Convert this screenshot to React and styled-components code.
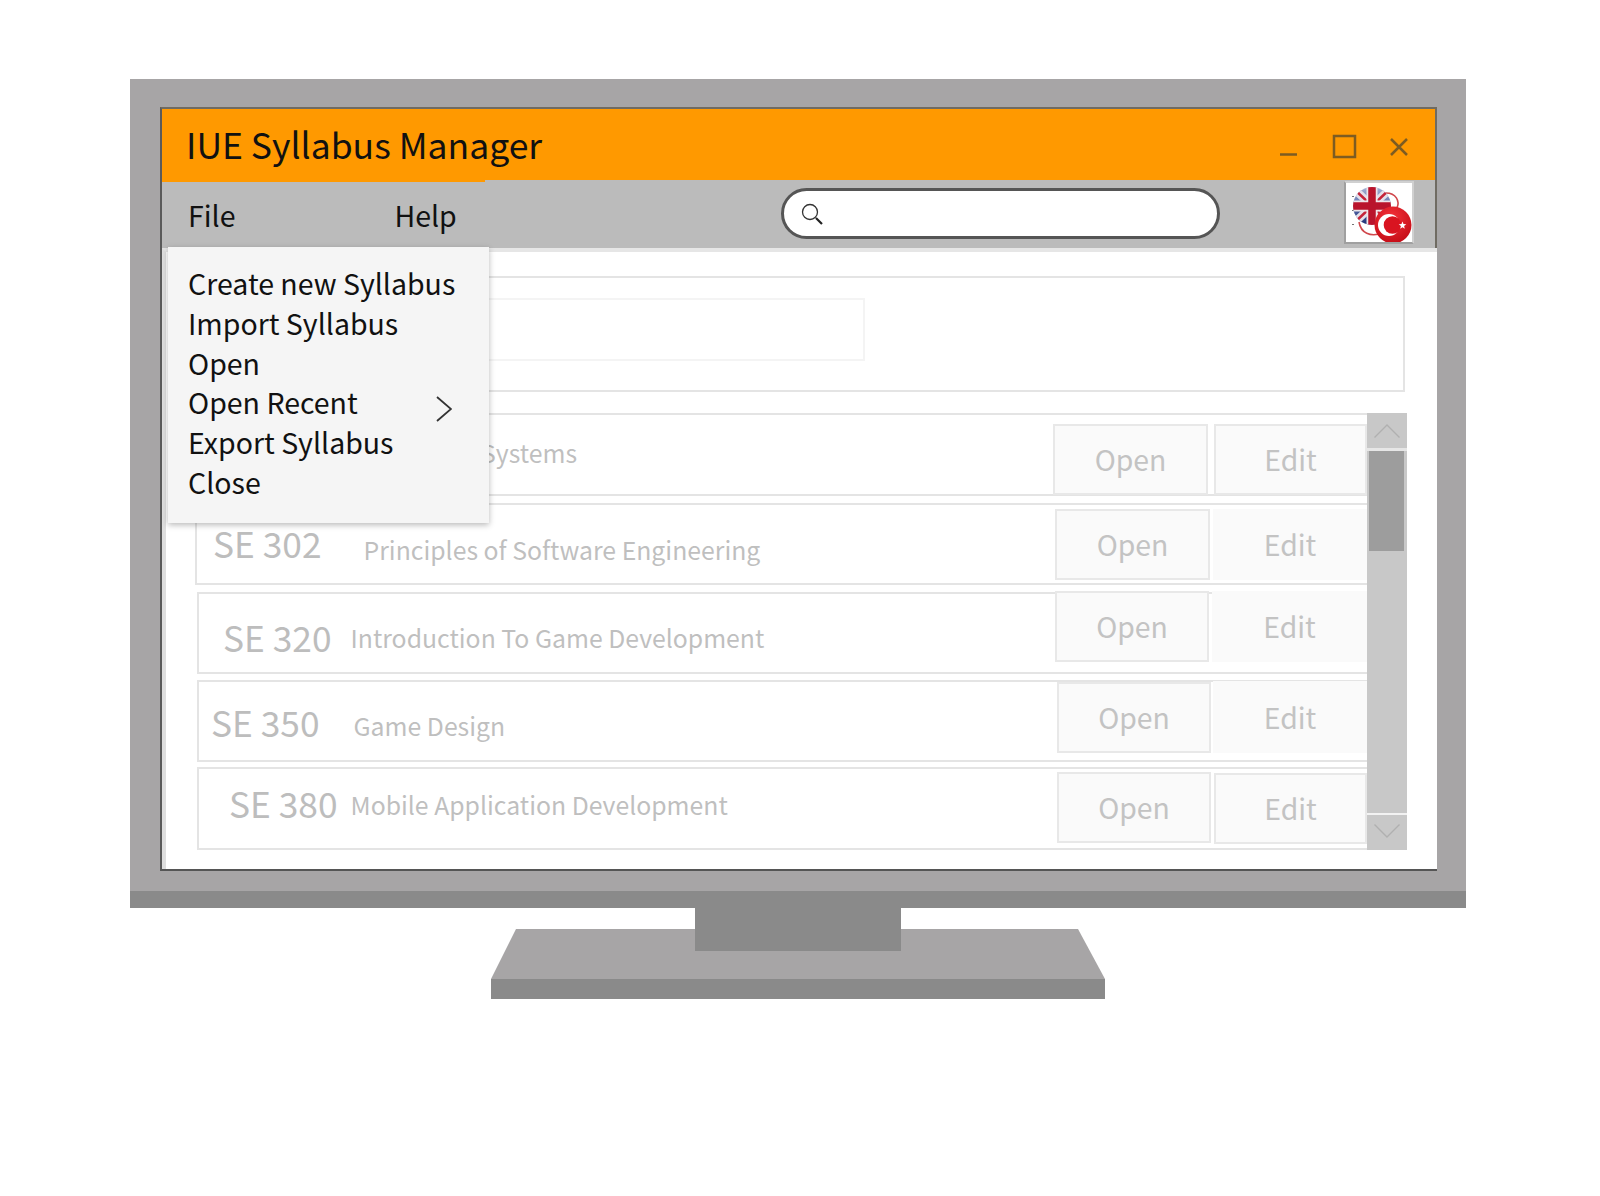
import React from 'react';
import styled, { createGlobalStyle, css } from 'styled-components';

const FONT = '"Noto Sans CJK SC", "Noto Sans", sans-serif';

const GlobalStyle = createGlobalStyle`
  html, body {
    margin: 0;
    background: #fff;
    font-family: ${FONT};
  }
`;

const Page = styled.div`
  width: 1600px;
  height: 1196px;
  padding: 79px 0 0 130px;
  box-sizing: border-box;
  overflow: hidden;
`;

const Monitor = styled.div`
  width: 1336px;
`;

const Bezel = styled.div`
  background: #a7a5a6;
  padding: 28px 29px 20px 30px;
  border-bottom: 17px solid #8a8a8a;
`;

const Stand = styled.svg`
  display: block;
  width: 1336px;
  height: 91px;
`;

const Window = styled.div`
  border-top: 2px solid #6f6b62;
  border-left: 2px solid #5a5a5a;
  border-bottom: 2px solid #555;
  background: #fff;
`;

const TitleBar = styled.div`
  height: 71px;
  background: #ff9900;
  border-right: 2px solid #6f6b62;
  display: flex;
  align-items: center;
  justify-content: space-between;
  padding: 0 24px 2px 24px;
  box-sizing: border-box;
`;

const Title = styled.h1`
  margin: 0;
  font-size: 35.5px;
  font-weight: 400;
  color: #111;
  line-height: 70px;
`;

const WindowControls = styled.svg`
  display: block;
  width: 132px;
  height: 28px;
  margin-top: 6px;
`;

const MenuBar = styled.div`
  position: relative;
  height: 68px;
  background: #bbbbbb;
  border-right: 2px solid #6f6b62;
  display: flex;
  align-items: flex-start;
  box-sizing: border-box;

  &::before {
    content: '';
    position: absolute;
    left: 0;
    top: 0;
    width: 323px;
    height: 2px;
    background: #ff9900;
  }
`;

const MenuLabels = styled.nav`
  display: flex;
  width: 619px;
  padding: 15px 0 0 26px;
  box-sizing: border-box;
  gap: 159px;
`;

const MenuLabel = styled.span`
  font-size: 28.5px;
  line-height: 40px;
  color: #111;
`;

const Search = styled.div`
  width: 439px;
  height: 51px;
  margin-top: 8px;
  border: 3px solid #555;
  border-radius: 26px;
  background: #fff;
  display: flex;
  align-items: center;
  padding: 2px 0 0 17px;
  box-sizing: border-box;
`;

const FlagButton = styled.div`
  width: 70px;
  height: 63px;
  margin: 1px 0 0 124px;
  border: 2px solid #a0a0a0;
  border-top-color: #d0d0d0;
  border-right-color: #d0d0d0;
  background: #fff;
  box-sizing: border-box;
`;

const FlagIcon = styled.svg`
  display: block;
  width: 66px;
  height: 59px;
`;

const Content = styled.div`
  position: relative;
  border-top: 4px solid #e6e6e6;
  border-left: 4px solid #dedede;
  padding: 24px 30px 19px 29px;
`;

const FileMenu = styled.div`
  position: absolute;
  left: 2px;
  top: -5px;
  z-index: 2;
  width: 321px;
  height: 276px;
  padding: 16px 37px 0 20px;
  box-sizing: border-box;
  background: #f5f5f5;
  box-shadow: 0 2px 6px rgba(0, 0, 0, 0.28);
`;

const FileMenuItem = styled.div`
  display: flex;
  justify-content: space-between;
  font-size: 28.5px;
  line-height: 39.8px;
  color: #111;
  white-space: nowrap;
`;

const Chevron = styled.svg`
  display: block;
  width: 16px;
  height: 26px;
  margin-top: 14px;
`;

const FilterBox = styled.div`
  height: 116px;
  margin-right: 2px;
  padding: 20px 0 0 22px;
  border: 2px solid #e4e4e4;
  box-sizing: border-box;
`;

const FilterField = styled.div`
  width: 646px;
  height: 63px;
  border: 2px solid #f4f4f4;
  box-sizing: border-box;
`;

const List = styled.div`
  display: grid;
  grid-template-columns: 1fr 40px;
  margin-top: 21px;
`;

const Rows = styled.div`
  display: flex;
  flex-direction: column;
`;

const Row = styled.div`
  display: flex;
  align-items: flex-start;
  height: ${(p) => p.$height}px;
  margin-top: ${(p) => p.$gap}px;
  margin-left: ${(p) => p.$indent}px;
  border: solid #e4e4e4;
  border-width: 2px 0 2px 2px;
  box-sizing: border-box;
`;

const RowText = styled.div`
  flex: 1;
  min-width: 0;
  display: flex;
  align-items: baseline;
  padding-left: ${(p) => p.$left}px;
  padding-top: ${(p) => p.$top}px;
`;

const Code = styled.span`
  font-size: 35.3px;
  line-height: 48px;
  color: #bdbdbd;
  white-space: nowrap;
`;

const Name = styled.span`
  font-size: 24.8px;
  line-height: 38px;
  color: #bfbfbf;
  white-space: nowrap;
  margin-left: ${(p) => p.$left}px;
  transform: translateY(${(p) => p.$shift}px);
`;

const Actions = styled.div`
  display: flex;
  flex: none;
`;

const ActionButton = styled.button`
  width: ${(p) => p.$width}px;
  height: ${(p) => p.$height}px;
  margin-top: ${(p) => p.$top}px;
  margin-left: ${(p) => p.$left}px;
  padding: 0 0 2px;
  background: #fafafa;
  font-family: ${FONT};
  font-size: 28.4px;
  color: #c3c3c3;
  box-sizing: border-box;
  ${(p) =>
    p.$flat
      ? css`
          border: none;
        `
      : css`
          border: 2px solid #e8e8e8;
        `}
`;

const Scrollbar = styled.div`
  display: flex;
  flex-direction: column;
  background: #c8c8c8;
`;

const ScrollArrow = styled.div`
  height: 35px;
  display: flex;
  align-items: center;
  justify-content: center;
  padding-bottom: ${(p) => p.$lift || 0}px;
  box-sizing: border-box;
`;

const ScrollDivider = styled.div`
  height: ${(p) => p.$height}px;
  background: ${(p) => p.$color};
`;

const ScrollThumb = styled.div`
  height: 100px;
  margin: 0 3px 0 2px;
  background: #9d9d9d;
`;

const ScrollTrack = styled.div`
  flex: 1;
`;

const rows = [
  {
    name: 'Systems', height: 83, gap: 0, indent: 0, left: 284, top: 18, nameLeft: 0, shift: 0,
    open: { left: 0, width: 155, top: 9, height: 71 }, edit: { left: 6, width: 153, top: 9, height: 71 },
  },
  {
    code: 'SE 302', name: 'Principles of Software Engineering', height: 82, gap: 7, indent: 0, left: 16, top: 14, nameLeft: 42, shift: 2,
    open: { left: 0, width: 155, top: 4, height: 71 }, edit: { left: 3, width: 154, top: 4, height: 71, flat: true },
  },
  {
    code: 'SE 320', name: 'Introduction To Game Development', height: 82, gap: 7, indent: 2, left: 24, top: 19, nameLeft: 19, shift: -4,
    open: { left: 0, width: 154, top: -3, height: 71 }, edit: { left: 3, width: 155, top: -3, height: 71, flat: true },
  },
  {
    code: 'SE 350', name: 'Game Design', height: 82, gap: 6, indent: 2, left: 12, top: 16, nameLeft: 34, shift: -1,
    open: { left: 0, width: 154, top: 0, height: 71 }, edit: { left: 2, width: 154, top: -1, height: 72, flat: true },
  },
  {
    code: 'SE 380', name: 'Mobile Application Development', height: 83, gap: 5, indent: 2, left: 30, top: 10, nameLeft: 13, shift: -3,
    open: { left: 0, width: 154, top: 3, height: 71 }, edit: { left: 3, width: 153, top: 4, height: 71 },
  },
];

const fileItems = ['Create new Syllabus', 'Import Syllabus', 'Open', 'Open Recent', 'Export Syllabus', 'Close'];

const UnitedKingdomFlag = () => (
  <g>
    <defs>
      <clipPath id="ukClip">
        <circle cx="26" cy="22" r="19" />
      </clipPath>
      <radialGradient id="trGlow" cx="45%" cy="30%" r="75%">
        <stop offset="0%" stopColor="#f4323a" />
        <stop offset="100%" stopColor="#c20a14" />
      </radialGradient>
      <linearGradient id="ukSky" x1="0" y1="0" x2="0" y2="1">
        <stop offset="0%" stopColor="#aab6d6" />
        <stop offset="55%" stopColor="#5468a8" />
        <stop offset="100%" stopColor="#1c2c70" />
      </linearGradient>
    </defs>
    <g clipPath="url(#ukClip)">
      <rect x="6" y="2" width="40" height="40" fill="url(#ukSky)" />
      <path d="M7 4 L45 40 M45 4 L7 40" stroke="#e4e0ea" strokeWidth="8" />
      <path d="M7 4 L45 40 M45 4 L7 40" stroke="#c5243a" strokeWidth="2.5" />
      <path d="M26 2 V42 M6 22 H46" stroke="#eee6ea" strokeWidth="11" />
      <path d="M26 2 V42 M6 22 H46" stroke="#b9142c" strokeWidth="7.5" />
    </g>
  </g>
);

const TurkeyFlag = () => (
  <g>
    <circle cx="47" cy="41" r="18.5" fill="url(#trGlow)" />
    <circle cx="43" cy="41" r="11" fill="#fff" />
    <circle cx="46.5" cy="41" r="8.8" fill="#d91420" />
    <path d="M56.5 37.5 l1 2.6 2.8 .2 -2.2 1.7 .7 2.7 -2.3 -1.5 -2.3 1.5 .7 -2.7 -2.2 -1.7 2.8 -.2z" fill="#fff" />
  </g>
);

const App = () => (
  <>
    <GlobalStyle />
    <Page>
      <Monitor>
        <Bezel>
          <Window>
            <TitleBar>
              <Title>IUE Syllabus Manager</Title>
              <WindowControls viewBox="0 0 132 28" fill="none" stroke="#7d5c22">
                <path d="M1 21.5 H18" strokeWidth="2.5" />
                <rect x="55" y="3" width="21" height="21" strokeWidth="2.5" />
                <path d="M112 6 L128 22 M128 6 L112 22" strokeWidth="2.5" />
              </WindowControls>
            </TitleBar>
            <MenuBar>
              <MenuLabels>
                <MenuLabel>File</MenuLabel>
                <MenuLabel>Help</MenuLabel>
              </MenuLabels>
              <Search>
                <svg width="24" height="24" viewBox="0 0 24 24" fill="none">
                  <circle cx="9" cy="9" r="7.5" stroke="#333" strokeWidth="1.3" />
                  <path d="M15 15 L21 21" stroke="#222" strokeWidth="2.2" />
                </svg>
              </Search>
              <FlagButton>
                <FlagIcon viewBox="0 -1 66 59" fill="none">
                  <path d="M40 9 C50 9 54 17 51 24 M13 38 C15 50 25 52 33 50" stroke="#d0474c" strokeWidth="1.6" />
                  <path d="M7 12 v1 M7 26 v1 M7 40 v1" stroke="#444" strokeWidth="1.5" />
                  <UnitedKingdomFlag />
                  <TurkeyFlag />
                </FlagIcon>
              </FlagButton>
            </MenuBar>
            <Content>
              <FileMenu>
                {fileItems.map((item) => (
                  <FileMenuItem key={item}>
                    {item}
                    {item === 'Open Recent' && (
                      <Chevron viewBox="0 0 16 26" fill="none">
                        <path d="M1 1 L15 13 L1 25" stroke="#333" strokeWidth="1.8" />
                      </Chevron>
                    )}
                  </FileMenuItem>
                ))}
              </FileMenu>
              <FilterBox>
                <FilterField />
              </FilterBox>
              <List>
                <Rows>
                  {rows.map((row) => (
                    <Row key={row.name} $height={row.height} $gap={row.gap} $indent={row.indent}>
                      <RowText $left={row.left} $top={row.top}>
                        {row.code && <Code>{row.code}</Code>}
                        <Name $left={row.nameLeft} $shift={row.shift}>{row.name}</Name>
                      </RowText>
                      <Actions>
                        <ActionButton $height={row.open.height} $width={row.open.width} $top={row.open.top} $left={row.open.left}>
                          Open
                        </ActionButton>
                        <ActionButton $height={row.edit.height} $width={row.edit.width} $top={row.edit.top} $left={row.edit.left} $flat={row.edit.flat}>
                          Edit
                        </ActionButton>
                      </Actions>
                    </Row>
                  ))}
                </Rows>
                <Scrollbar>
                  <ScrollArrow>
                    <svg width="26" height="14" viewBox="0 0 26 14" fill="none">
                      <path d="M0.5 13.5 L13 1 L25.5 13.5" stroke="#b0b0b0" strokeWidth="1.4" />
                    </svg>
                  </ScrollArrow>
                  <ScrollDivider $height={3} $color="#e6e6e6" />
                  <ScrollThumb />
                  <ScrollTrack />
                  <ScrollDivider $height={2} $color="#f2f2f2" />
                  <ScrollArrow $lift={3}>
                    <svg width="26" height="14" viewBox="0 0 26 14" fill="none">
                      <path d="M0.5 0.5 L13 13 L25.5 0.5" stroke="#b0b0b0" strokeWidth="1.4" />
                    </svg>
                  </ScrollArrow>
                </Scrollbar>
              </List>
            </Content>
          </Window>
        </Bezel>
        <Stand viewBox="0 0 1336 91">
          <path d="M386 21 H948 L975 71 V91 H361 V71 Z" fill="#a7a5a6" />
          <rect x="361" y="71" width="614" height="20" fill="#8a8a8a" />
          <rect x="565" y="0" width="206" height="43" fill="#8a8a8a" />
        </Stand>
      </Monitor>
    </Page>
  </>
);

export default App;
